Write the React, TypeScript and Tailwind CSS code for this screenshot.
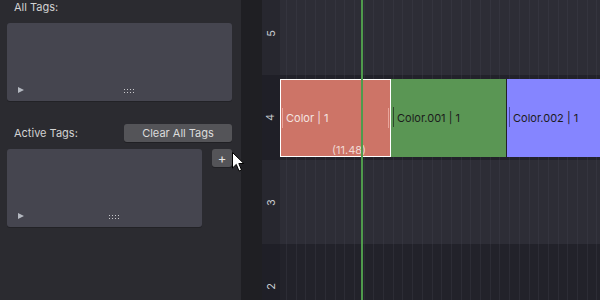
const font = { fontFamily: 'Inter, "DejaVu Sans", sans-serif' };

const Expander = () => (
  <svg width="6" height="6" viewBox="0 0 6 6" className="block">
    <path d="M0 0 L6 3 L0 6 Z" fill="#b4b8c0" />
  </svg>
);

const Grip = () => (
  <svg width="11" height="4" viewBox="0 0 11 4" className="block">
    {[0, 3, 6, 9].map((x) => (
      <g key={x}>
        <rect x={x} y={0} width="1" height="1" fill="#c8c8cc" />
        <rect x={x} y={3} width="1" height="1" fill="#c8c8cc" />
      </g>
    ))}
  </svg>
);

const TagList = ({ gripOffset }: { gripOffset: string }) => (
  <div className="relative h-[78px] flex-1 rounded-[3px] bg-[#45454f] shadow-[0_1px_0_#222226]">
    <div className="absolute left-[11px] bottom-[8px]">
      <Expander />
    </div>
    <div className={`absolute bottom-[8px] ${gripOffset}`}>
      <Grip />
    </div>
  </div>
);

const lightRow =
  "bg-[#2d2d36] bg-[repeating-linear-gradient(90deg,transparent_0,transparent_6px,#34343e_6px,#34343e_7px,transparent_7px,transparent_9.7px)]";
const darkRow =
  "bg-[#22222a] bg-[repeating-linear-gradient(90deg,transparent_0,transparent_6px,#2c2c35_6px,#2c2c35_7px,transparent_7px,transparent_9.7px)]";

const Channel = ({ n, light, h, children }: { n: number; light: boolean; h: string; children?: React.ReactNode }) => (
  <div className={`flex ${h}`}>
    <div className={`w-[18px] flex items-center justify-center ${light ? "bg-[#27272f]" : "bg-[#1f1f27]"}`}>
      <span className="-rotate-90 text-[11px] leading-none text-[#c8ccd0]">{n}</span>
    </div>
    <div className={`flex-1 ${light ? lightRow : darkRow}`}>{children}</div>
  </div>
);

export default function App() {
  return (
    <div className="relative flex h-[300px] w-[600px] overflow-hidden bg-[#1f1f23] text-[11px]" style={font}>
      {/* sidebar */}
      <div className="w-[241px] shrink-0 bg-[#2b2b30] pl-[7px] pr-[9px]">
        <div className="h-[23px] pl-[7px] leading-[14px] text-[#d2d2d2]">All Tags:</div>
        <TagList gripOffset="left-[117px]" />
        <div className="mt-[23px] flex h-[18px] items-center">
          <span className="flex-1 pl-[7px] text-[#d2d2d2]">Active Tags:</span>
          <button className="h-[18px] w-[108px] rounded-[3px] bg-[#545458] text-[#dcdcdc] shadow-[0_1px_0_#202024]">
            Clear All Tags
          </button>
        </div>
        <div className="mt-[7px] flex items-start gap-[10px]">
          <TagList gripOffset="left-[102px]" />
          <button className="flex h-[18px] w-[20px] items-center justify-center rounded-[3px] bg-[#545458] text-[13px] leading-none text-[#e6e6e6] shadow-[0_1px_0_#202024]">
            +
          </button>
        </div>
      </div>

      {/* gutter */}
      <div className="w-[21px] shrink-0 bg-[#1f1f23]" />

      {/* sequencer */}
      <div className="flex-1 overflow-hidden">
        <div className="-mt-[9px] flex flex-col">
          <Channel n={5} light h="h-[84px]" />
          <Channel n={4} light={false} h="h-[85px]">
            <div className="flex h-full pt-[4px] pb-[3px]">
              <div className="relative flex w-[111px] items-center border border-white bg-[#cd7467] pl-[5px] text-[#f4e4e0]">
                <span className="absolute left-[1px] top-[28px] h-[20px] w-px bg-[#e8a49a]" />
                <span className="absolute right-[1px] top-[28px] h-[20px] w-px bg-[#e8a49a]" />
                <span>Color | 1</span>
                <span className="absolute bottom-[-2px] left-[51px] text-[#f0d8d2]">(11.48)</span>
              </div>
              <div className="relative flex w-[115px] items-center bg-[#5a9654] pl-[6px] text-[#1c1c1c]">
                <span className="absolute left-[2px] top-[28px] h-[20px] w-px bg-[#2e4a2c]" />
                <span>Color.001 | 1</span>
              </div>
              <div className="w-px bg-[#222228]" />
              <div className="relative flex flex-1 items-center bg-[#8585ff] pl-[6px] text-[#1c1c1c]">
                <span className="absolute left-[2px] top-[28px] h-[20px] w-px bg-[#4c4ca0]" />
                <span>Color.002 | 1</span>
              </div>
            </div>
          </Channel>
          <Channel n={3} light h="h-[84px]" />
          <Channel n={2} light={false} h="h-[84px]" />
        </div>
      </div>

      {/* playhead */}
      <div className="absolute left-[361px] top-0 h-full w-[2px] bg-[#4f9a4c]" />

      {/* mouse cursor */}
      <svg className="absolute left-[232px] top-[152px]" width="13" height="21" viewBox="0 0 13 21">
        <path d="M0.5 0.5 L0.5 16 L4.3 12.4 L7 19 L9.5 18 L6.8 11.5 L11.8 11.5 Z" fill="#ffffff" stroke="#000000" strokeWidth="1" />
      </svg>
    </div>
  );
}
